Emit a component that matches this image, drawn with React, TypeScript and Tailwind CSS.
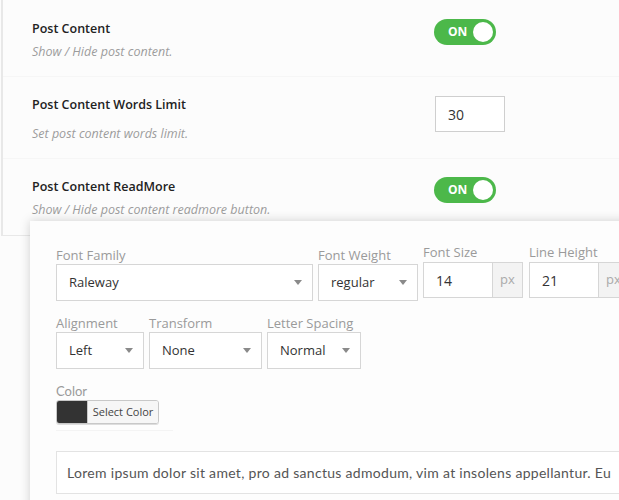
import React from "react";

const Toggle = () => (
  <div className="relative w-[62px] h-[26px] rounded-full bg-[#4cb84a] flex items-center">
    <span className="ml-[14px] text-[12px] font-bold text-white leading-none">ON</span>
    <span className="absolute right-[3px] top-[3px] w-[20px] h-[20px] rounded-full bg-white" />
  </div>
);

const Arrow = () => (
  <svg width="8" height="5" viewBox="0 0 8 5" className="shrink-0">
    <path d="M0 0 L8 0 L4 5 Z" fill="#8a8a8a" />
  </svg>
);

const Select = ({ value, w }: { value: string; w: string }) => (
  <div className={`${w} h-[37px] border border-[#d6d6d6] bg-white flex items-center justify-between pl-[12px] pr-[10px]`}>
    <span className="text-[13px] text-[#333]">{value}</span>
    <Arrow />
  </div>
);

const Label = ({ children }: { children: React.ReactNode }) => (
  <div className="h-[18px] leading-[18px] text-[13px] text-[#9a9a9a]">{children}</div>
);

const PxInput = ({ value }: { value: string }) => (
  <div className="flex h-[36px] w-[100px] border border-[#d6d6d6] bg-white">
    <div className="flex-1 flex items-center pl-[12px] text-[14px] text-[#333]">{value}</div>
    <div className="w-[30px] shrink-0 border-l border-[#d6d6d6] bg-[#f3f3f3] flex items-center justify-center text-[13px] text-[#aaa]">px</div>
  </div>
);

const Title = ({ children }: { children: React.ReactNode }) => (
  <div className="text-[12.5px] font-semibold leading-[18px] text-[#222] pt-[1px]">{children}</div>
);

const Desc = ({ children, mt }: { children: React.ReactNode; mt: string }) => (
  <div className={`${mt} text-[12.5px] italic leading-[18px] text-[#9c9c9c]`}>{children}</div>
);

export default function App() {
  return (
    <div
      className="relative w-[619px] h-[500px] overflow-hidden bg-[#fcfcfc]"
      style={{ fontFamily: '"Open Sans", "Liberation Sans", sans-serif' }}
    >
      {/* settings rows */}
      <div className="h-[236px] border-l-2 border-b border-[#e8e8e8] ml-[1px]">
        <div className="h-[77px] flex pt-[19px] border-b border-[#f6f6f6]">
          <div className="w-[431px] pl-[29px]">
            <Title>Post Content</Title>
            <Desc mt="mt-[5px]">Show / Hide post content.</Desc>
          </div>
          <Toggle />
        </div>
        <div className="h-[82px] flex pt-[18px] border-b border-[#f6f6f6]">
          <div className="w-[432px] pl-[29px]">
            <Title>Post Content Words Limit</Title>
            <Desc mt="mt-[11px]">Set post content words limit.</Desc>
          </div>
          <div className="mt-[1px] w-[70px] h-[36px] border border-[#cfcfcf] bg-white flex items-center pl-[12px] text-[14px] text-[#333]">30</div>
        </div>
        <div className="flex pt-[18px]">
          <div className="w-[431px] pl-[29px]">
            <Title>Post Content ReadMore</Title>
            <Desc mt="mt-[5px]">Show / Hide post content readmore button.</Desc>
          </div>
          <Toggle />
        </div>
      </div>

      {/* typography panel */}
      <div className="relative -mt-[15px] ml-[30px] w-[640px] h-[300px] bg-[#fdfdfd] shadow-[0_0_10px_rgba(0,0,0,0.18)] pt-[25px] pl-[26px]">
        <div className="flex">
          <div className="mr-[5px]">
            <Label>Font Family</Label>
            <Select value="Raleway" w="w-[257px]" />
          </div>
          <div className="mr-[5px]">
            <Label>Font Weight</Label>
            <Select value="regular" w="w-[100px]" />
          </div>
          <div className="mr-[6px] -mt-[3px]">
            <div className="h-[19px] leading-[18px] text-[13px] text-[#9a9a9a]">Font Size</div>
            <PxInput value="14" />
          </div>
          <div className="-mt-[3px]">
            <div className="h-[19px] leading-[18px] text-[13px] text-[#9a9a9a]">Line Height</div>
            <PxInput value="21" />
          </div>
        </div>

        <div className="flex mt-[13px]">
          <div className="mr-[5px]">
            <Label>Alignment</Label>
            <Select value="Left" w="w-[88px]" />
          </div>
          <div className="mr-[5px]">
            <Label>Transform</Label>
            <Select value="None" w="w-[113px]" />
          </div>
          <div>
            <Label>Letter Spacing</Label>
            <Select value="Normal" w="w-[94px]" />
          </div>
        </div>

        <div className="mt-[13px]">
          <div
            className="h-[18px] leading-[18px] text-[13px] text-[#9a9a9a]"
            style={{ fontFamily: 'Lato, "Open Sans", sans-serif' }}
          >
            Color
          </div>
          <div className="flex h-[24px] w-[103px] border border-[#c8c8c8] rounded-[3px] overflow-hidden shadow-[0_1px_0_#ddd]">
            <div className="w-[30px] bg-[#333]" />
            <div className="flex-1 bg-[#f6f6f6] flex items-center justify-center text-[11px] text-[#444] border-l border-[#c8c8c8]">
              Select Color
            </div>
          </div>
          <div className="mt-[6px] w-[117px] h-px bg-[#f4f4f4]" />
        </div>

        <div className="mt-[20px] h-[43px] w-[600px] border border-[#e3e3e3] bg-white flex items-center pl-[10px]">
          <span
            className="text-[14px] text-[#555] whitespace-nowrap tracking-[0.3px]"
            style={{ fontFamily: 'Lato, "Open Sans", sans-serif' }}
          >
            Lorem ipsum dolor sit amet, pro ad sanctus admodum, vim at insolens appellantur. Eu
          </span>
        </div>
      </div>
    </div>
  );
}
